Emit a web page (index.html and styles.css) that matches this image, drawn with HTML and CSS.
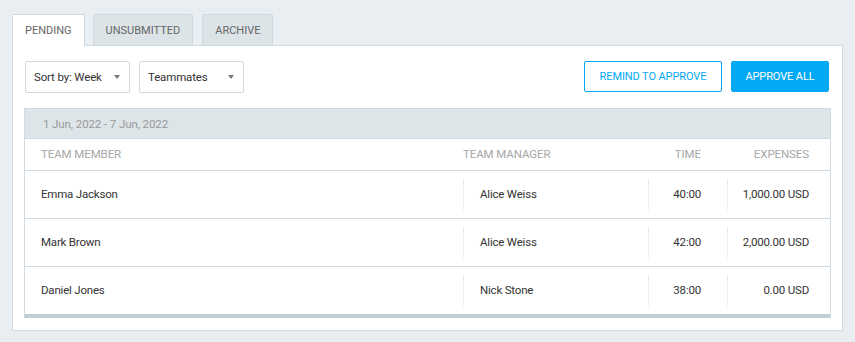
FILE: index.html
```html
<!DOCTYPE html>
<html lang="en">

<head>
    <meta charset="UTF-8">
    <meta name="viewport" content="width=device-width, initial-scale=1.0">
    <title>Approvals</title>
    <link rel="stylesheet" href="styles.css">
</head>

<body>

    <section class="approvals">
        <nav class="tabs">
            <div class="tab active">PENDING</div>
            <div class="tab">UNSUBMITTED</div>
            <div class="tab">ARCHIVE</div>
        </nav>

        <div class="panel">
            <div class="toolbar">
                <div class="filters">
                    <div class="dropdown">Sort by: Week <span class="caret"></span></div>
                    <div class="dropdown">Teammates <span class="caret"></span></div>
                </div>
                <div class="actions">
                    <button class="btn btn-outline">REMIND TO APPROVE</button>
                    <button class="btn btn-primary">APPROVE ALL</button>
                </div>
            </div>

            <div class="week-table">
                <div class="week-title">1 Jun, 2022 - 7 Jun, 2022</div>

                <div class="row head">
                    <div class="cell">TEAM MEMBER</div>
                    <div class="cell manager">TEAM MANAGER</div>
                    <div class="cell num time">TIME</div>
                    <div class="cell num expenses">EXPENSES</div>
                </div>

                <div class="row">
                    <div class="cell">Emma Jackson</div>
                    <div class="cell manager divided">Alice Weiss</div>
                    <div class="cell num time divided">40:00</div>
                    <div class="cell num expenses divided">1,000.00 USD</div>
                </div>

                <div class="row">
                    <div class="cell">Mark Brown</div>
                    <div class="cell manager divided">Alice Weiss</div>
                    <div class="cell num time divided">42:00</div>
                    <div class="cell num expenses divided">2,000.00 USD</div>
                </div>

                <div class="row last">
                    <div class="cell">Daniel Jones</div>
                    <div class="cell manager divided">Nick Stone</div>
                    <div class="cell num time divided">38:00</div>
                    <div class="cell num expenses divided">0.00 USD</div>
                </div>
            </div>
        </div>
    </section>

</body>

</html>
```

FILE: styles.css
```css
body, html {
    margin: 0;
    padding: 0;
    background: #e9eef2;
    font-family: Roboto, 'Liberation Sans', sans-serif;
    color: #333;
}

.approvals {
    padding: 14px 12px 0 12px;
}

.tabs {
    display: flex;
    gap: 8px;
}

.tab {
    height: 31px;
    padding: 0 12px;
    box-sizing: border-box;
    display: flex;
    align-items: center;
    font-size: 11px;
    color: #666;
    background: #dce4e8;
    border: 1px solid #cfdae0;
    border-bottom: none;
    border-radius: 2px 2px 0 0;
}

.tab:last-child {
    margin-left: 1px;
}

.tab.active {
    background: #fff;
    height: 32px;
    margin-bottom: -1px;
    position: relative;
    z-index: 1;
}

.panel {
    background: #fff;
    border: 1px solid #cfdae0;
    padding: 15px 11px 12px 11px;
}

.toolbar {
    display: flex;
    justify-content: space-between;
    padding: 0 2px 0 1px;
}

.filters,
.actions {
    display: flex;
    gap: 9px;
}

.dropdown {
    width: 105px;
    height: 32px;
    box-sizing: border-box;
    border: 1px solid #cfdae0;
    border-radius: 2px;
    display: flex;
    align-items: center;
    justify-content: space-between;
    padding: 0 9px 0 8px;
    font-size: 11.5px;
    letter-spacing: -0.15px;
    color: #333;
}

.caret {
    width: 0;
    height: 0;
    border-left: 3.5px solid transparent;
    border-right: 3.5px solid transparent;
    border-top: 4px solid #777;
}

.btn {
    height: 31px;
    box-sizing: border-box;
    font-family: inherit;
    font-size: 11px;
    letter-spacing: -0.1px;
    border-radius: 2px;
    padding: 0;
    white-space: nowrap;
}

.btn-outline {
    width: 138px;
    background: #fff;
    color: #03a9f4;
    border: 1px solid #03a9f4;
}

.btn-primary {
    width: 98px;
    background: #03a9f4;
    color: #fff;
    border: 1px solid #03a9f4;
}

.week-table {
    margin-top: 15px;
    border: 1px solid #d0dbe1;
    border-bottom: 4px solid #c0ced6;
}

.week-title {
    height: 29px;
    background: #dde5e9;
    border-bottom: 1px solid #d0dbe1;
    display: flex;
    align-items: center;
    padding-left: 18px;
    font-size: 11.5px;
    letter-spacing: -0.1px;
    color: #999;
}

.row {
    display: grid;
    grid-template-columns: 438px 185px 79px 1fr;
    height: 47px;
    border-bottom: 1px solid #d0dbe1;
    font-size: 11.5px;
    letter-spacing: -0.2px;
}

.row.last {
    border-bottom: none;
}

.row.head {
    height: 31px;
    font-size: 11.5px;
    letter-spacing: -0.1px;
    color: #a6a6a6;
}

.cell {
    display: flex;
    align-items: center;
    padding-left: 16px;
    padding-bottom: 2px;
}

.head .manager {
    padding-left: 0;
}

.cell.num {
    justify-content: flex-end;
    padding-left: 0;
}

.time {
    padding-right: 26px;
}

.expenses {
    padding-right: 21px;
}

.divided {
    margin: 8px 0;
    border-left: 1px dotted #d5dde2;
}
```
